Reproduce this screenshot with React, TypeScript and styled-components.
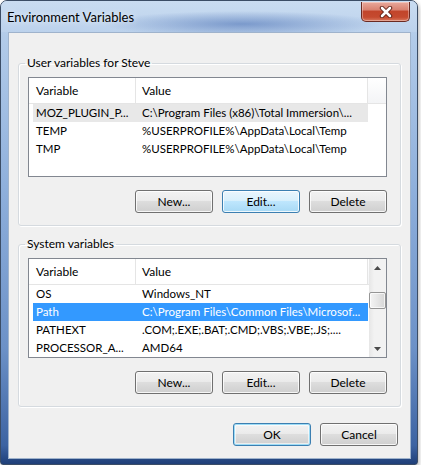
import React from 'react';
import styled, { createGlobalStyle, css } from 'styled-components';

const FONT = `Lato, "Liberation Sans", sans-serif`;

const GlobalStyle = createGlobalStyle`
  html, body { margin: 0; padding: 0; background: #ffffff; }
  body { font-family: ${FONT}; font-size: 11.5px; color: #000; }
  * { box-sizing: border-box; }
`;

const Window = styled.div`
  width: 418px;
  height: 465px;
  border: 1px solid #3b4d66;
  border-radius: 7px 7px 3px 3px;
  background: linear-gradient(
    to bottom,
    #c2d7ee 0%,
    #b2cbe9 8%,
    #8fb0dc 40%,
    #6c91c7 75%,
    #3c63a2 96%,
    #1f3f78 100%
  );
  display: flex;
  flex-direction: column;
  padding: 0 6px 5px 7px;
  box-shadow: 1px 2px 4px rgba(0, 0, 0, 0.3);
  overflow: hidden;
`;

const TitleBar = styled.div`
  height: 31px;
  flex: none;
  display: flex;
  align-items: flex-start;
  justify-content: space-between;
  margin: 0 -6px 0 -7px;
  padding: 0 7px 0 6px;
  background:
    radial-gradient(ellipse 140px 13px at 58% 74%, rgba(55, 95, 170, 0.5), rgba(55, 95, 170, 0) 100%),
    linear-gradient(to bottom, #c9dcf1 0%, #bcd2ec 100%);
`;

const Title = styled.div`
  padding-top: 8px;
  font-size: 13px;
  line-height: 16px;
  color: #000;
  text-shadow: 0 0 6px rgba(255, 255, 255, 0.9);
`;

const CloseButton = styled.div`
  width: 49px;
  height: 20px;
  margin-top: 1px;
  border: 1px solid #6a2a22;
  border-top: none;
  border-radius: 0 0 5px 5px;
  background: linear-gradient(
    to bottom,
    #e9a99c 0%,
    #d98372 40%,
    #c2452b 50%,
    #c54a2f 80%,
    #d9795f 100%
  );
  box-shadow: inset 0 0 0 1px rgba(255, 255, 255, 0.35);
  display: flex;
  align-items: center;
  justify-content: center;
`;

const Client = styled.div`
  flex: 1;
  background: #f0f0f0;
  border: 1px solid #9fb3cc;
  padding: 22px 9px 12px 9px;
  display: flex;
  flex-direction: column;
`;

const Group = styled.fieldset<{ $gap?: number }>`
  margin: ${(p) => p.$gap ?? 0}px 0 0 0;
  border: 1px solid #d5dadf;
  border-radius: 3px;
  padding: 6px 13px 12px 9px;
  min-width: 0;
  box-shadow: inset 1px 1px 0 #ffffff, 1px 1px 0 #ffffff;
`;

const Legend = styled.legend`
  padding: 0 2px;
  margin-left: -3px;
  line-height: 16px;
  font-size: 12px;
`;

const ListView = styled.div`
  height: 100px;
  border: 1px solid #828790;
  background: #ffffff;
  display: flex;
  overflow: hidden;
`;

const ListBody = styled.div`
  flex: 1;
  min-width: 0;
  display: flex;
  flex-direction: column;
`;

const Header = styled.div`
  height: 26px;
  flex: none;
  display: flex;
  border-bottom: 1px solid #e5e5e5;
  background: #ffffff;
`;

const HeaderCell = styled.div<{ $w: number; $pad: number }>`
  width: ${(p) => p.$w}px;
  flex: none;
  padding-left: ${(p) => p.$pad}px;
  line-height: 25px;
  font-size: 12px;
  border-right: 1px solid #e5e5e5;
`;

const HeaderFiller = styled.div`
  flex: 1;
  background: linear-gradient(to bottom, #ffffff 0%, #f3f4f6 100%);
`;

const Row = styled.div<{ $state?: 'active' | 'inactive' }>`
  height: 18px;
  flex: none;
  width: 335px;
  margin-left: 4px;
  display: flex;
  line-height: 18px;
  white-space: nowrap;
  ${(p) =>
    p.$state === 'active' &&
    css`
      background: #3399ff;
      color: #ffffff;
    `}
  ${(p) =>
    p.$state === 'inactive' &&
    css`
      background: #e8e8e8;
    `}
`;

const NameCell = styled.div`
  width: 103px;
  flex: none;
  padding-left: 3px;
  overflow: hidden;
`;

const ValueCell = styled.div`
  flex: 1;
  min-width: 0;
  padding-left: 6px;
  overflow: hidden;
`;

const ScrollBar = styled.div`
  width: 17px;
  flex: none;
  display: flex;
  flex-direction: column;
  background: linear-gradient(to right, #e6e6e6 0%, #f2f2f2 30%, #f2f2f2 100%);
`;

const ScrollArrow = styled.div`
  height: 17px;
  flex: none;
  display: flex;
  align-items: center;
  justify-content: center;
`;

const ScrollTrack = styled.div`
  flex: 1;
  padding: 16px 0 0 0;
`;

const Thumb = styled.div`
  height: 17px;
  border: 1px solid #959595;
  border-radius: 2px;
  background: linear-gradient(to right, #f4f4f4 0%, #e6e6e6 50%, #d6d6d6 100%);
  box-shadow: inset 0 0 0 1px rgba(255, 255, 255, 0.7);
`;

const ButtonRow = styled.div<{ $top: number; $right?: number }>`
  display: flex;
  justify-content: flex-end;
  gap: 9px;
  margin-top: ${(p) => p.$top}px;
  padding-right: ${(p) => p.$right ?? 0}px;
`;

const Button = styled.button<{ $variant?: 'hover' | 'default' }>`
  width: 78px;
  height: 23px;
  padding: 0;
  font-family: ${FONT};
  font-size: 12px;
  color: #000;
  border: 1px solid #707070;
  border-radius: 3px;
  background: linear-gradient(to bottom, #f2f2f2 0%, #ebebeb 45%, #dddddd 50%, #cfcfcf 100%);
  box-shadow: inset 0 0 0 1px rgba(255, 255, 255, 0.8);
  ${(p) =>
    p.$variant === 'hover' &&
    css`
      border-color: #3c7fb1;
      background: linear-gradient(to bottom, #eaf6fd 0%, #d9f0fc 45%, #bee6fd 50%, #a7d9f5 100%);
    `}
  ${(p) =>
    p.$variant === 'default' &&
    css`
      border-color: #3c7fb1;
      box-shadow: inset 0 0 0 1px #9ddcf6, inset 0 0 0 2px rgba(255, 255, 255, 0.6);
    `}
`;

const CloseIcon = () => (
  <svg width="14" height="12" viewBox="0 0 14 12">
    <path d="M3 2 L11 10 M11 2 L3 10" stroke="#5a1c12" strokeWidth="4.4" strokeLinecap="round" />
    <path d="M3 2 L11 10 M11 2 L3 10" stroke="#ffffff" strokeWidth="2.6" strokeLinecap="round" />
  </svg>
);

const Arrow = ({ up }: { up?: boolean }) => (
  <svg width="7" height="4" viewBox="0 0 7 4">
    <path d={up ? 'M0 4 L3.5 0 L7 4 Z' : 'M0 0 L3.5 4 L7 0 Z'} fill="#4a4a4a" />
  </svg>
);

type Item = { name: string; value: string; state?: 'active' | 'inactive' };

const userVars: Item[] = [
  { name: 'MOZ_PLUGIN_P...', value: 'C:\\Program Files (x86)\\Total Immersion\\...', state: 'inactive' },
  { name: 'TEMP', value: '%USERPROFILE%\\AppData\\Local\\Temp' },
  { name: 'TMP', value: '%USERPROFILE%\\AppData\\Local\\Temp' },
];

const systemVars: Item[] = [
  { name: 'OS', value: 'Windows_NT' },
  { name: 'Path', value: 'C:\\Program Files\\Common Files\\Microsof...', state: 'active' },
  { name: 'PATHEXT', value: '.COM;.EXE;.BAT;.CMD;.VBS;.VBE;.JS;....' },
  { name: 'PROCESSOR_A...', value: 'AMD64' },
];

const VarList = ({ items, scroll }: { items: Item[]; scroll?: boolean }) => (
  <ListView>
    <ListBody>
      <Header>
        <HeaderCell $w={107} $pad={7}>Variable</HeaderCell>
        <HeaderCell $w={232} $pad={6}>Value</HeaderCell>
        <HeaderFiller />
      </Header>
      {items.map((it) => (
        <Row key={it.name} $state={it.state}>
          <NameCell>{it.name}</NameCell>
          <ValueCell>{it.value}</ValueCell>
        </Row>
      ))}
    </ListBody>
    {scroll && (
      <ScrollBar>
        <ScrollArrow>
          <Arrow up />
        </ScrollArrow>
        <ScrollTrack>
          <Thumb />
        </ScrollTrack>
        <ScrollArrow>
          <Arrow />
        </ScrollArrow>
      </ScrollBar>
    )}
  </ListView>
);

export default function App() {
  return (
    <>
      <GlobalStyle />
      <Window>
        <TitleBar>
          <Title>Environment Variables</Title>
          <CloseButton>
            <CloseIcon />
          </CloseButton>
        </TitleBar>
        <Client>
          <Group>
            <Legend>User variables for Steve</Legend>
            <VarList items={userVars} />
            <ButtonRow $top={13}>
              <Button>New...</Button>
              <Button $variant="hover">Edit...</Button>
              <Button>Delete</Button>
            </ButtonRow>
          </Group>
          <Group $gap={10}>
            <Legend>System variables</Legend>
            <VarList items={systemVars} scroll />
            <ButtonRow $top={13}>
              <Button>New...</Button>
              <Button>Edit...</Button>
              <Button>Delete</Button>
            </ButtonRow>
          </Group>
          <ButtonRow $top={16} $right={3}>
            <Button $variant="default">OK</Button>
            <Button>Cancel</Button>
          </ButtonRow>
        </Client>
      </Window>
    </>
  );
}
